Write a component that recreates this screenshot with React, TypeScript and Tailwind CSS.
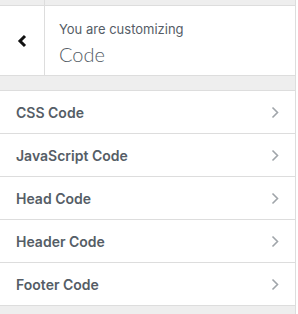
import React from "react";

const items = ["CSS Code", "JavaScript Code", "Head Code", "Header Code", "Footer Code"];

const Chevron: React.FC = () => (
    <svg width="8" height="13" viewBox="0 0 8 13" fill="none">
        <path d="M1.5 1.5 L6.5 6.5 L1.5 11.5" stroke="#a0a5aa" strokeWidth="1.6" />
    </svg>
);

const App: React.FC = () => {
    return (
        <div className="flex w-[298px] h-[314px] bg-white overflow-hidden" style={{ fontFamily: "Inter, 'Liberation Sans', sans-serif" }}>
            <div className="flex flex-col w-[296px] bg-[#eeeeee] border-r border-[#dddddd]">
                <div className="flex h-[6px] border-b border-[#dddddd]">
                    <div className="w-[45px] border-r border-[#dddddd]" />
                </div>
                <div className="flex h-[70px] bg-white border-b border-[#dddddd]">
                    <button className="flex w-[45px] items-center justify-center border-r border-[#dddddd]">
                        <svg width="11" height="14" viewBox="0 0 11 14" fill="none">
                            <path d="M8 2 L3 7 L8 12" stroke="#111" strokeWidth="3" />
                        </svg>
                    </button>
                    <div className="flex flex-col pl-[14px] pt-[14px]">
                        <span className="text-[13px] leading-[18px] text-[#555d66]">You are customizing</span>
                        <span className="text-[20px] leading-[28px] mt-[2px] font-light text-[#555d66]" style={{ fontFamily: "Lato, 'Liberation Sans', sans-serif" }}>Code</span>
                    </div>
                </div>
                <div className="h-[15px] border-b border-[#dddddd]" />
                <ul className="flex flex-col">
                    {items.map((item) => (
                        <li
                            key={item}
                            className="flex h-[43px] items-center justify-between bg-white border-b border-[#dddddd] pl-[16px] pr-[16px]"
                        >
                            <span className="text-[14px] font-semibold text-[#555d66]">{item}</span>
                            <Chevron />
                        </li>
                    ))}
                </ul>
            </div>
        </div>
    );
};

export default App;
